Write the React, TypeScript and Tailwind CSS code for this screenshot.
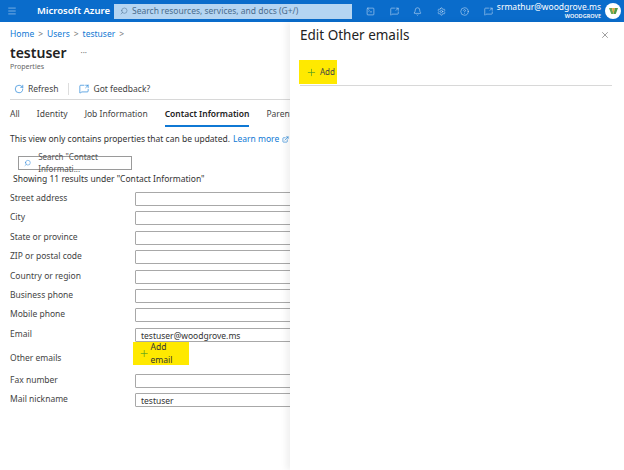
import React from "react";
import { Bell, CircleHelp, ExternalLink, Menu, MessageSquareShare, Plus, RotateCw, Search, Settings, SquareTerminal, X } from "lucide-react";

const fieldsTop = [
    { label: "Street address" },
    { label: "City" },
    { label: "State or province" },
    { label: "ZIP or postal code" },
    { label: "Country or region" },
    { label: "Business phone" },
    { label: "Mobile phone" },
    { label: "Email", value: "testuser@woodgrove.ms" },
];

const fieldsBottom = [
    { label: "Fax number" },
    { label: "Mail nickname", value: "testuser" },
];

function FieldRow({ label, value }: { label: string; value?: string }) {
    return (
        <div className="flex h-[19.4px] items-start">
            <div className="w-[125px] shrink-0 text-[8.5px] leading-[11px] text-[#444]">{label}</div>
            <div className="h-[14px] w-[170px] shrink-0 rounded-[1px] border border-[#a8a8a8] bg-white pl-[5px] text-[8.5px] leading-[13px] text-[#333]">
                {value}
            </div>
        </div>
    );
}

function TopBar() {
    return (
        <header className="flex h-[22px] items-center bg-[#0a6ccb] text-white">
            <Menu className="ml-[7px] h-[10px] w-[10px] text-[#b9d6f2]" strokeWidth={1.5} />
            <span className="ml-[20px] w-[77px] text-[9.5px] font-semibold">Microsoft Azure</span>
            <div className="flex h-[15px] w-[238px] items-center bg-[#b5d5f2] pl-[6px] text-[8.5px] text-[#4a6c8c]">
                <Search className="mr-[4px] h-[8px] w-[8px] -scale-x-100" strokeWidth={1.5} />
                Search resources, services, and docs (G+/)
            </div>
            <div className="ml-[14px] flex items-center gap-[14.5px] text-[#d4e6f7]">
                <SquareTerminal className="h-[9px] w-[9px]" strokeWidth={1.4} />
                <MessageSquareShare className="h-[9px] w-[9px]" strokeWidth={1.4} />
                <Bell className="h-[9px] w-[9px]" strokeWidth={1.4} />
                <Settings className="h-[9px] w-[9px]" strokeWidth={1.4} />
                <CircleHelp className="h-[9px] w-[9px]" strokeWidth={1.4} />
                <MessageSquareShare className="h-[9px] w-[9px]" strokeWidth={1.4} />
            </div>
            <div className="ml-auto mr-[3px] flex items-center gap-[4px]">
                <div className="flex flex-col items-end">
                    <span className="text-[8.5px] leading-[10px] whitespace-nowrap">srmathur@woodgrove.ms</span>
                    <span className="text-[5.5px] leading-[8px] font-semibold">WOODGROVE</span>
                </div>
                <div className="flex h-[16px] w-[16px] items-center justify-center rounded-full bg-white">
                    <svg viewBox="0 0 12 8" className="h-[6px] w-[9px]">
                        <path d="M0 0h4l2 8H3z" fill="#6aa84f" />
                        <path d="M4 0h4L6 8z" fill="#e8a33d" />
                        <path d="M8 0h4L9 8H6z" fill="#4f9a45" />
                    </svg>
                </div>
            </div>
        </header>
    );
}

function PropertiesPage() {
    return (
        <main className="w-[290px] shrink-0 overflow-hidden pl-[10px]">
            <div className="mt-[6px] flex items-center text-[8.5px] leading-[11px] text-[#0f78d4]">
                Home <span className="mx-[4px] text-[#777]">&gt;</span> Users <span className="mx-[4px] text-[#777]">&gt;</span> testuser <span className="ml-[4px] text-[#777]">&gt;</span>
            </div>
            <div className="mt-[5px] flex items-center text-[14px] leading-[18px] font-semibold text-[#222]">
                testuser
                <span className="ml-[14px] text-[8px] leading-[8px] font-normal text-[#777]">···</span>
            </div>
            <div className="text-[7px] leading-[10px] text-[#666]">Properties</div>

            <div className="mt-[7px] flex h-[21px] items-center border-b border-[#d8d8d8] pl-[4px] text-[8.5px] text-[#444]">
                <RotateCw className="h-[10px] w-[10px] text-[#0f78d4]" strokeWidth={1.5} />
                <span className="ml-[4px]">Refresh</span>
                <div className="mx-[10px] h-[12px] w-px bg-[#ddd]" />
                <MessageSquareShare className="h-[10px] w-[10px] text-[#0f78d4]" strokeWidth={1.5} />
                <span className="ml-[4px]">Got feedback?</span>
            </div>

            <nav className="mt-[8px] flex h-[19px] gap-[17px] whitespace-nowrap text-[8.5px] text-[#444]">
                <span>All</span>
                <span>Identity</span>
                <span>Job Information</span>
                <span className="h-[19px] border-b-2 border-[#0f78d4] font-semibold text-[#222]">Contact Information</span>
                <span>Parental controls</span>
            </nav>

            <p className="mt-[6px] flex items-center whitespace-nowrap text-[8.5px] leading-[12px] text-[#333]">
                This view only contains properties that can be updated.
                <span className="ml-[3px] text-[#0f78d4]">Learn more</span>
                <ExternalLink className="ml-[3px] h-[7px] w-[7px] text-[#0f78d4]" />
            </p>

            <div className="mt-[11px] ml-[8px] flex h-[14px] w-[114px] items-center border border-[#9a9a9a] pl-[5px] text-[8px] text-[#555]">
                <Search className="mr-[7px] h-[8px] w-[8px] -scale-x-100 text-[#0f78d4]" strokeWidth={1.5} />
                Search "Contact Informati...
            </div>
            <div className="mt-[3px] ml-[3px] text-[8.5px] leading-[11px] text-[#333]">Showing 11 results under "Contact Information"</div>

            <div className="mt-[8px]">
                {fieldsTop.map((f) => (
                    <FieldRow key={f.label} label={f.label} value={f.value} />
                ))}
                <div className="flex h-[26.5px]">
                    <div className="mt-[5px] w-[123px] shrink-0 text-[8.5px] leading-[11px] text-[#444]">Other emails</div>
                    <div className="-mt-[5px] flex h-[23px] w-[56px] items-center bg-[#ffe900] pl-[6px] text-[8.5px] text-[#333]">
                        <Plus className="mr-[1px] h-[11px] w-[11px] text-[#4f9e1f]" strokeWidth={1.5} />
                        Add email
                    </div>
                </div>
                {fieldsBottom.map((f) => (
                    <FieldRow key={f.label} label={f.label} value={f.value} />
                ))}
            </div>
        </main>
    );
}

function EditPanel() {
    return (
        <aside className="flex-1 bg-white pl-[10px] pr-[12px] shadow-[-4px_0_6px_rgba(0,0,0,0.06)]">
            <div className="flex items-center justify-between pt-[4px]">
                <h1 className="text-[13.5px] leading-[18px] font-normal text-[#222]">Edit Other emails</h1>
                <X className="mr-[2px] h-[10px] w-[10px] text-[#666]" strokeWidth={1.5} />
            </div>
            <div className="mt-[16px] border-b border-[#d8d8d8] pb-[1px]">
                <div className="flex h-[24px] w-[38px] -translate-x-[1px] items-center bg-[#ffe900] pl-[7px] text-[8px] text-[#444]">
                    <Plus className="mr-[3px] h-[11px] w-[11px] text-[#4f9e1f]" strokeWidth={1.5} />
                    Add
                </div>
            </div>
        </aside>
    );
}

export default function App() {
    return (
        <div className="flex h-[470px] w-[624px] flex-col overflow-hidden bg-white font-['Noto_Sans','Liberation_Sans',sans-serif]">
            <TopBar />
            <div className="flex min-h-0 flex-1">
                <PropertiesPage />
                <EditPanel />
            </div>
        </div>
    );
}
